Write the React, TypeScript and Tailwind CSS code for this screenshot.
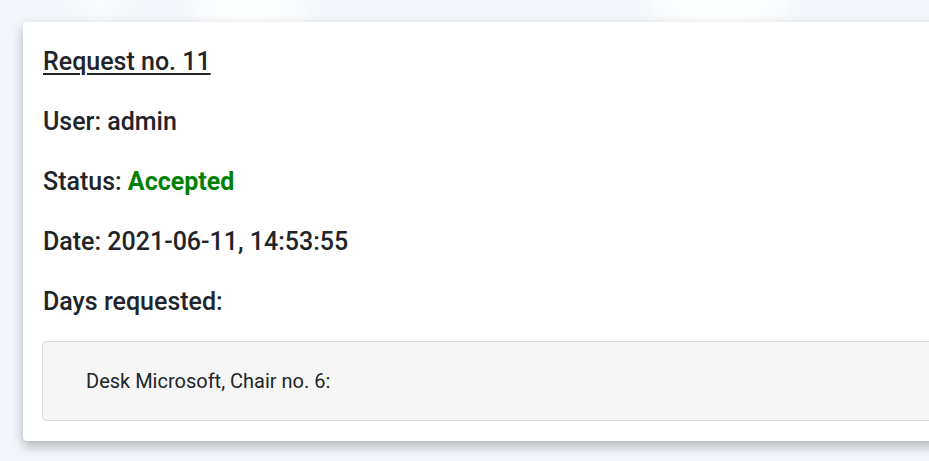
export default function App() {
  const lineClass = "text-[25px] leading-[38px] font-medium text-[#212529]";

  return (
    <div className="relative w-[929px] h-[461px] overflow-hidden bg-[#f3f7fb] font-['Roboto',sans-serif]">
      {/* soft cloud shapes behind the card */}
      <div className="absolute left-[70px] top-[-40px] w-[60px] h-[60px] rounded-full bg-white/60 blur-md" />
      <div className="absolute left-[190px] top-[-20px] w-[120px] h-[60px] rounded-full bg-white/70 blur-md" />
      <div className="absolute left-[650px] top-[-30px] w-[140px] h-[70px] rounded-full bg-white/70 blur-md" />

      <div className="relative ml-[23px] mt-[22px] w-[1000px] rounded bg-white px-5 pt-[21px] pb-5 shadow-[0_5px_12px_rgba(0,0,0,0.28)]">
        <div className="flex flex-col gap-[22px]">
          <div className={lineClass}>
            <span className="underline decoration-2 underline-offset-[3px]">Request no. 11</span>
          </div>
          <div className={lineClass}>User: admin</div>
          <div className={lineClass}>
            Status: <span className="font-bold text-[#008000]">Accepted</span>
          </div>
          <div className={lineClass}>Date: 2021-06-11, 14:53:55</div>
          <div className={lineClass}>Days requested:</div>
        </div>
        <div className="mt-[20px] -mr-5 ml-[-1px] h-[80px] flex items-center rounded border border-[#dcdcdc] bg-[#f6f6f6] pl-[43px] text-[20px] text-[#212529]">
          Desk Microsoft, Chair no. 6:
        </div>
      </div>
    </div>
  );
}
